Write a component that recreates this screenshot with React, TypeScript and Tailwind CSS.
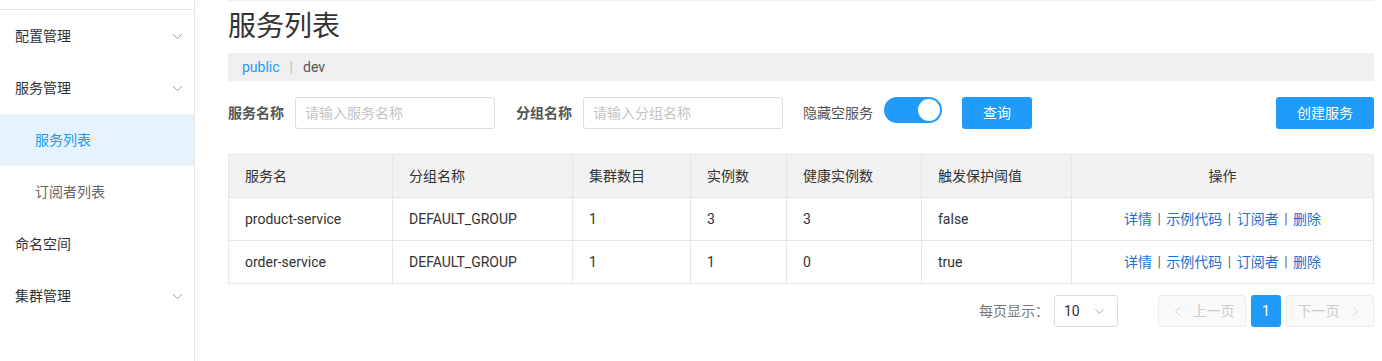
import { ChevronDown, ChevronLeft, ChevronRight } from "lucide-react";

const FONT = "font-['Roboto','Noto_Sans_CJK_SC',sans-serif]";

const navItems = [
  { label: "配置管理", arrow: true },
  { label: "服务管理", arrow: true },
  { label: "服务列表", sub: true, active: true },
  { label: "订阅者列表", sub: true },
  { label: "命名空间" },
  { label: "集群管理", arrow: true },
];

const columns = [
  { title: "服务名", width: 164 },
  { title: "分组名称", width: 180 },
  { title: "集群数目", width: 118 },
  { title: "实例数", width: 96 },
  { title: "健康实例数", width: 135 },
  { title: "触发保护阈值", width: 150 },
  { title: "操作", width: 302, center: true },
];

const rows = [
  ["product-service", "DEFAULT_GROUP", "1", "3", "3", "false"],
  ["order-service", "DEFAULT_GROUP", "1", "1", "0", "true"],
];

const Sidebar = () => (
  <aside className="w-[195px] shrink-0 border-r border-[#e8e8e8] min-h-[361px]">
    <div className="h-[9px]" />
    <ul className="border-t border-[#e8e8e8]">
      {navItems.map((item) => (
        <li
          key={item.label}
          className={`flex h-[52px] items-center justify-between pr-[8px] text-[14px] ${
            item.sub ? "pl-[35px]" : "pl-[15px]"
          } ${item.active ? "bg-[#e4f3fe] text-[#209bfa]" : item.sub ? "text-[#666]" : "text-[#333]"}`}
        >
          <span>{item.label}</span>
          {item.arrow && <ChevronDown size={17} strokeWidth={1.2} className="text-[#888]" />}
        </li>
      ))}
    </ul>
  </aside>
);

const Sep = () => <span className="px-[2px] text-[#666]">|</span>;

const Actions = () => (
  <span className="text-[#1f6fd1]">
    详情 <Sep /> 示例代码 <Sep /> 订阅者 <Sep /> 删除
  </span>
);

export default function App() {
  return (
    <div className={`flex bg-white text-[#333] ${FONT}`}>
      <Sidebar />
      <main className="flex-1 pl-[33px] pr-[9px]">
        <div className="border-t border-[#e6f0fa]">
          <h1 className="flex h-[52px] items-center text-[28px] text-[#333]">服务列表</h1>
          <div className="flex h-[28px] items-center bg-[#efefef] pl-[14px] text-[14px]">
            <span className="text-[#209bfa]">public</span>
            <span className="mx-[10px] text-[#bbb]">|</span>
            <span className="text-[#555]">dev</span>
          </div>

          <div className="mt-[16px] flex h-[32px] items-center text-[14px]">
            <span className="font-bold text-[#555]">服务名称</span>
            <input
              placeholder="请输入服务名称"
              className="ml-[11px] h-[32px] w-[200px] rounded-[3px] border border-[#dcdcdc] px-[9px] text-[14px] placeholder:text-[#c4c4c4]"
            />
            <span className="ml-[21px] font-bold text-[#555]">分组名称</span>
            <input
              placeholder="请输入分组名称"
              className="ml-[11px] h-[32px] w-[200px] rounded-[3px] border border-[#dcdcdc] px-[9px] text-[14px] placeholder:text-[#c4c4c4]"
            />
            <span className="ml-[20px] text-[#555]">隐藏空服务</span>
            <span className="ml-[11px] flex h-[26px] w-[58px] items-center justify-end self-start rounded-full bg-[#209bfa] pr-[2px]">
              <span className="h-[22px] w-[22px] rounded-full bg-white" />
            </span>
            <button className="ml-[20px] h-[32px] w-[70px] rounded-[3px] bg-[#209bfa] text-white">查询</button>
            <button className="ml-auto h-[32px] w-[98px] rounded-[3px] bg-[#209bfa] text-white">创建服务</button>
          </div>

          <table className="mt-[25px] w-full table-fixed border-collapse text-[14px]">
            <colgroup>
              {columns.map((c) => (
                <col key={c.title} style={{ width: c.width }} />
              ))}
            </colgroup>
            <thead>
              <tr className="h-[43px] bg-[#f2f2f2]">
                {columns.map((c) => (
                  <th
                    key={c.title}
                    className={`border border-[#e6e6e6] px-[16px] font-normal text-[#333] ${
                      c.center ? "text-center" : "text-left"
                    }`}
                  >
                    {c.title}
                  </th>
                ))}
              </tr>
            </thead>
            <tbody>
              {rows.map((r) => (
                <tr key={r[0]} className="h-[43px]">
                  {r.map((v, i) => (
                    <td key={i} className="border border-[#e6e6e6] px-[16px] text-[#333]">
                      {v}
                    </td>
                  ))}
                  <td className="border border-[#e6e6e6] px-[16px] text-center">
                    <Actions />
                  </td>
                </tr>
              ))}
            </tbody>
          </table>

          <div className="mt-[11px] flex h-[32px] items-center justify-end text-[14px]">
            <span className="text-[#777]">每页显示：</span>
            <div className="ml-[5px] flex h-[32px] w-[64px] items-center justify-between rounded-[3px] border border-[#dcdcdc] pl-[9px] pr-[10px] text-[#333]">
              <span>10</span>
              <ChevronDown size={15} strokeWidth={1.3} className="text-[#999]" />
            </div>
            <button className="ml-[40px] flex h-[32px] w-[88px] items-center justify-center gap-[8px] rounded-[3px] border border-[#ececec] bg-[#fafafa] text-[#ccc]">
              <ChevronLeft size={15} strokeWidth={1.5} />
              上一页
            </button>
            <button className="ml-[5px] h-[32px] w-[30px] rounded-[3px] bg-[#209bfa] text-white">1</button>
            <button className="ml-[5px] flex h-[32px] w-[88px] items-center justify-center gap-[8px] rounded-[3px] border border-[#ececec] bg-[#fafafa] text-[#ccc]">
              下一页
              <ChevronRight size={15} strokeWidth={1.5} />
            </button>
          </div>
        </div>
      </main>
    </div>
  );
}
